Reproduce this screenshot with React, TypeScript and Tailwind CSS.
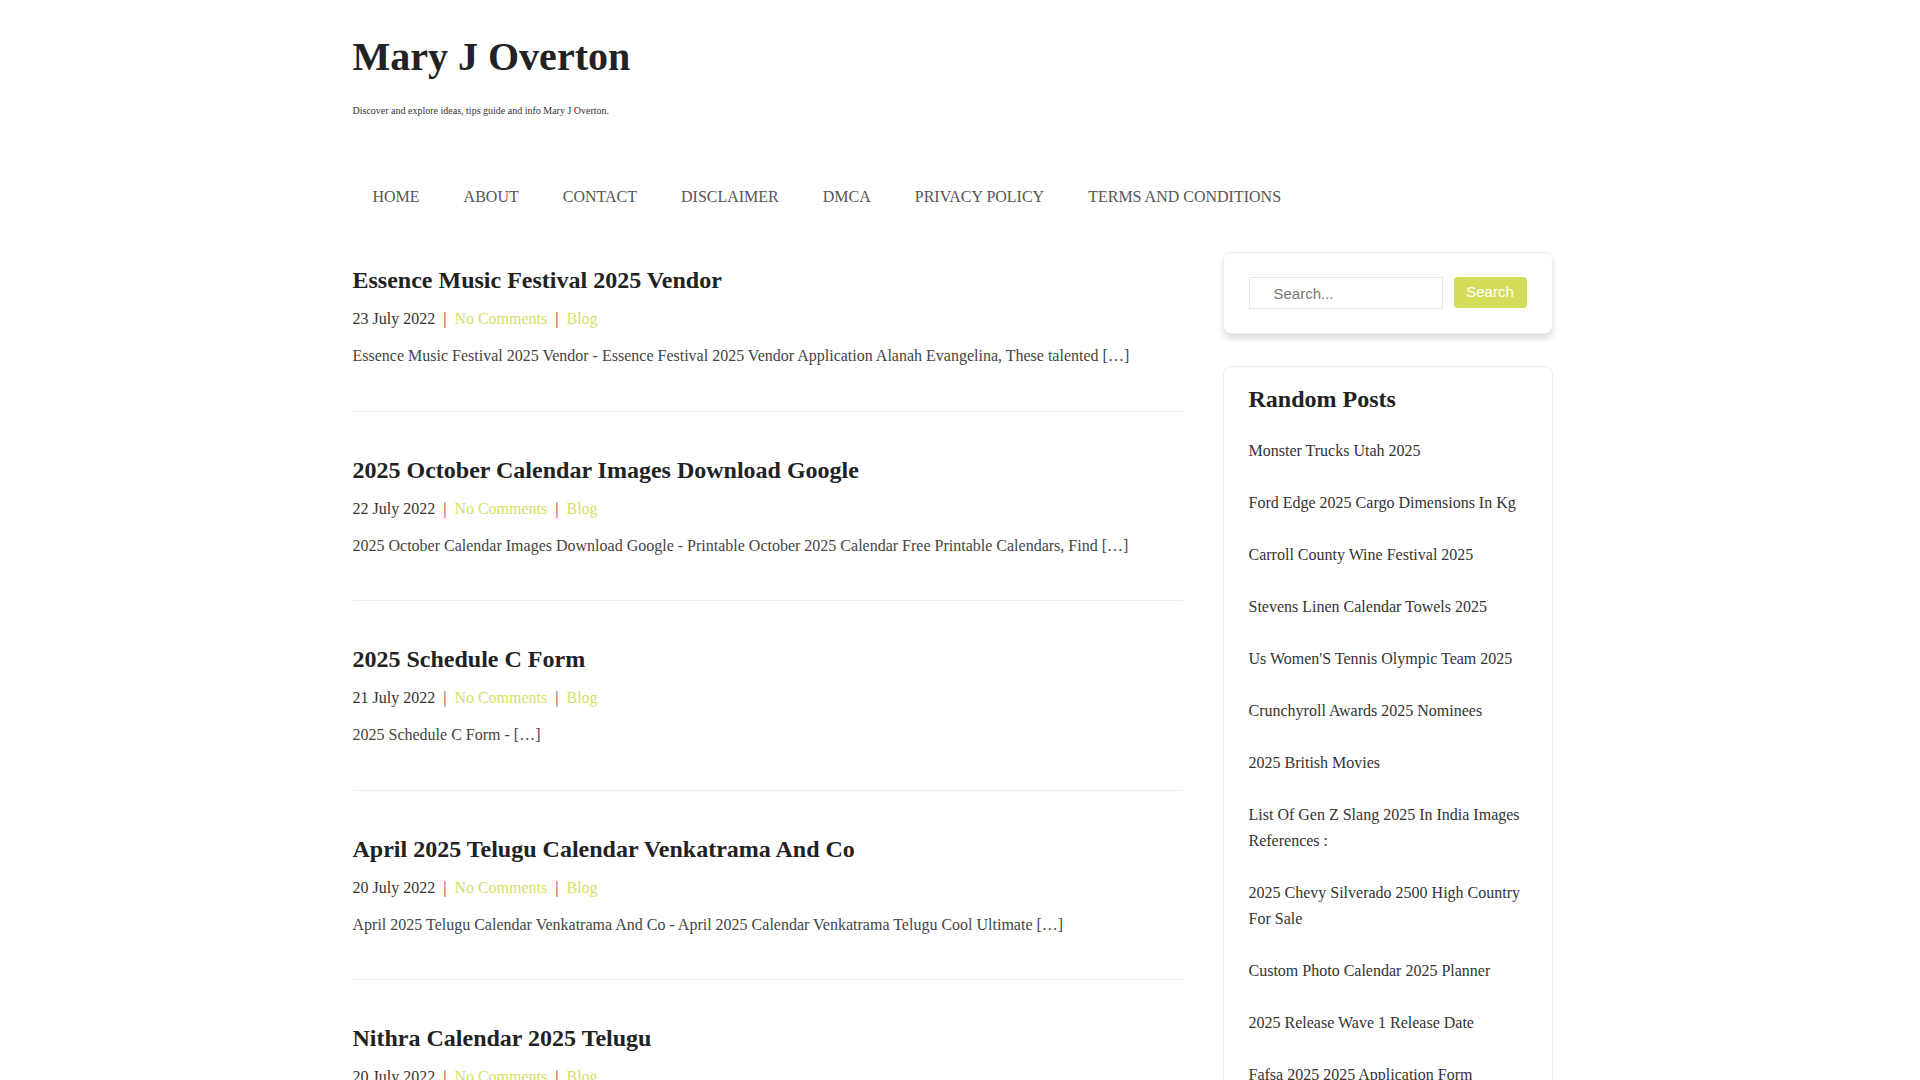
const navItems = [
  "Home",
  "About",
  "Contact",
  "Disclaimer",
  "DMCA",
  "Privacy Policy",
  "Terms and Conditions",
];

const posts = [
  {
    title: "Essence Music Festival 2025 Vendor",
    date: "23 July 2022",
    excerpt:
      "Essence Music Festival 2025 Vendor - Essence Festival 2025 Vendor Application Alanah Evangelina, These talented […]",
  },
  {
    title: "2025 October Calendar Images Download Google",
    date: "22 July 2022",
    excerpt:
      "2025 October Calendar Images Download Google - Printable October 2025 Calendar Free Printable Calendars, Find […]",
  },
  {
    title: "2025 Schedule C Form",
    date: "21 July 2022",
    excerpt: "2025 Schedule C Form - […]",
  },
  {
    title: "April 2025 Telugu Calendar Venkatrama And Co",
    date: "20 July 2022",
    excerpt:
      "April 2025 Telugu Calendar Venkatrama And Co - April 2025 Calendar Venkatrama Telugu Cool Ultimate […]",
  },
  {
    title: "Nithra Calendar 2025 Telugu",
    date: "20 July 2022",
    excerpt:
      "Nithra Calendar 2025 Telugu - Nithra Telugu Calendar 2025 Download Free Printable Monthly Calendar, Check […]",
  },
  {
    title: "2025 Honda Pilot Trim Levels",
    date: "19 July 2022",
    excerpt: "2025 Honda Pilot Trim Levels - […]",
  },
];

const randomPosts = [
  "Monster Trucks Utah 2025",
  "Ford Edge 2025 Cargo Dimensions In Kg",
  "Carroll County Wine Festival 2025",
  "Stevens Linen Calendar Towels 2025",
  "Us Women'S Tennis Olympic Team 2025",
  "Crunchyroll Awards 2025 Nominees",
  "2025 British Movies",
  "List Of Gen Z Slang 2025 In India Images References :",
  "2025 Chevy Silverado 2500 High Country For Sale",
  "Custom Photo Calendar 2025 Planner",
  "2025 Release Wave 1 Release Date",
  "Fafsa 2025 2025 Application Form",
  "Nfl Draft 2025 Date And Time",
];

export default function App() {
  return (
    <div className="min-h-screen bg-white pr-[15px] font-['Liberation_Serif',serif] text-[16px] text-[#333]">
      <div className="mx-auto w-[1200px]">
        {/* Header */}
        <header className="pt-[33px]">
          <h1 className="text-[40px] font-bold leading-[48px] text-[#222]">Mary J Overton</h1>
          <p className="mt-[22px] text-[10px] leading-[15px] text-[#333]">
            Discover and explore ideas, tips guide and info Mary J Overton.
          </p>
        </header>

        {/* Navigation */}
        <nav className="mt-[67px]">
          <ul className="flex gap-1">
            {navItems.map((item) => (
              <li key={item} className="px-5 text-[16px] uppercase leading-[24px] text-[#555]">
                {item}
              </li>
            ))}
          </ul>
        </nav>

        {/* Content */}
        <div className="mt-[43px] flex items-start gap-10">
          <main className="w-[830px] pt-[12px]">
            {posts.map((post, i) => (
              <article key={post.title}>
                {i > 0 && <div className="mb-[42px] mt-[41.5px] h-px bg-[#eeeeee]" />}
                <h2 className="text-[24px] font-bold leading-[32px] text-[#222]">{post.title}</h2>
                <div className="mt-[10px] flex leading-[26px]">
                  <span className="text-[#333]">{post.date}</span>
                  <span className="mx-2 text-[#555]">|</span>
                  <span className="text-[#d6e063]">No Comments</span>
                  <span className="mx-2 text-[#555]">|</span>
                  <span className="text-[#d6e063]">Blog</span>
                </div>
                <p className="mt-[11px] leading-[26px] text-[#444]">{post.excerpt}</p>
              </article>
            ))}
            <div className="mt-[41.5px] h-px bg-[#eeeeee]" />
          </main>

          <aside className="w-[330px]">
            {/* Search */}
            <div className="rounded-lg border border-[#eeeeee] bg-white px-[25px] py-6 shadow-[0_5px_6px_rgba(0,0,0,0.13)]">
              <div className="flex items-start gap-[11px] font-['Liberation_Sans',sans-serif]">
                <input
                  type="text"
                  placeholder="Search..."
                  className="h-[32px] min-w-0 flex-1 border border-[#e6e6e6] bg-white pl-[24px] text-[15px] text-[#555] outline-none placeholder:text-[#777]"
                />
                <button className="h-[31px] w-[73px] rounded-[4px] bg-[#d3dd5a] text-[15px] text-white">
                  Search
                </button>
              </div>
            </div>

            {/* Random Posts */}
            <div className="mt-8 rounded-lg border border-[#eeeeee] bg-white px-[25px] pb-6 pt-[16px]">
              <h3 className="text-[24px] font-bold leading-[32px] text-[#222]">Random Posts</h3>
              <ul className="mt-[10px]">
                {randomPosts.map((item) => (
                  <li key={item} className="py-[13px] leading-[26px] text-[#333]">
                    {item}
                  </li>
                ))}
              </ul>
            </div>
          </aside>
        </div>
        <div className="h-16" />
      </div>
    </div>
  );
}
